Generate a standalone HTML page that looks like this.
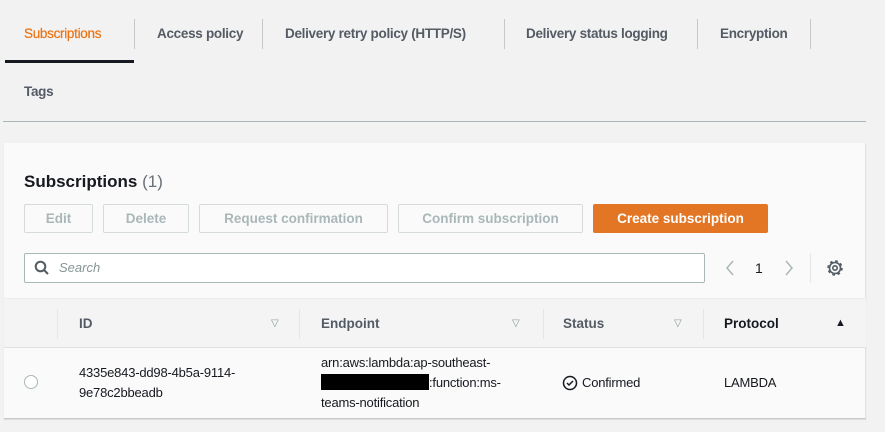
<!DOCTYPE html>
<html><head><style>
*{margin:0;padding:0;box-sizing:border-box}
body{width:885px;height:432px;background:#f2f2f2;font-family:"Liberation Sans",sans-serif;position:relative;overflow:hidden;color:#16191f}
.a{position:absolute;white-space:nowrap}
.tab{font-size:13.5px;font-weight:bold;color:#545b64;top:26px;letter-spacing:-0.3px}
.div{position:absolute;width:1px;background:#c8c8c8;top:19px;height:30px}
.btn{position:absolute;top:204px;height:29px;border:1px solid #d5dbdb;background:#fafafa;color:#aab7b8;font-size:13.5px;font-weight:bold;display:flex;align-items:center;justify-content:center;border-radius:2px}
.th{font-size:13.5px;font-weight:bold;color:#545b64;top:316px}
.cd{position:absolute;width:1px;background:#e6e6e6;top:309px;height:30px}
.tri{position:absolute;top:318px;font-size:10px;color:#879596}
.td{font-size:13px;color:#16191f;line-height:20px;letter-spacing:-0.2px}
</style></head><body>
<div class="a tab" style="left:24px;color:#ec7211;font-weight:normal;-webkit-text-stroke:0.2px #ec7211">Subscriptions</div>
<div class="div" style="left:134px"></div>
<div class="a tab" style="left:157px">Access policy</div>
<div class="div" style="left:262px"></div>
<div class="a tab" style="left:285px">Delivery retry policy (HTTP/S)</div>
<div class="div" style="left:504px"></div>
<div class="a tab" style="left:526px">Delivery status logging</div>
<div class="div" style="left:697px"></div>
<div class="a tab" style="left:720px">Encryption</div>
<div class="div" style="left:810px"></div>
<div class="a" style="left:5px;top:60px;width:129px;height:3px;background:#16191f"></div>
<div class="a tab" style="left:24px;top:84px">Tags</div>
<div class="a" style="left:3px;top:121px;width:863px;height:1px;background:#aab7b8"></div>

<div class="a" style="left:4px;top:143px;width:862px;height:276px;background:#fafafa;border-right:1px solid #e0e0e0;border-bottom:1px solid #c8c8c8;box-shadow:0 1px 1px rgba(0,0,0,.1)"></div>
<div class="a" style="left:24px;top:172px;font-size:17px;font-weight:bold">Subscriptions <span style="font-weight:normal;color:#687078">(1)</span></div>
<div class="btn" style="left:24px;width:69px">Edit</div>
<div class="btn" style="left:103px;width:86px">Delete</div>
<div class="btn" style="left:199px;width:189px">Request confirmation</div>
<div class="btn" style="left:398px;width:185px">Confirm subscription</div>
<div class="btn" style="left:593px;width:175px;background:#e27625;border-color:#e27625;color:#fff">Create subscription</div>

<div class="a" style="left:24px;top:253px;width:681px;height:30px;border:1px solid #aab7b8;background:#fff;border-radius:2px"></div>
<svg class="a" style="left:34px;top:260px" width="16" height="16" viewBox="0 0 16 16"><circle cx="6.5" cy="6.5" r="4.8" fill="none" stroke="#545b64" stroke-width="2"/><line x1="10" y1="10" x2="14" y2="14" stroke="#545b64" stroke-width="2"/></svg>
<div class="a" style="left:59px;top:260px;font-size:13px;font-style:italic;color:#879596">Search</div>
<svg class="a" style="left:723px;top:259px" width="14" height="18"><path d="M10 2L4 9l6 7" fill="none" stroke="#aab7b8" stroke-width="1.5"/></svg>
<div class="a" style="left:755px;top:260px;font-size:14px">1</div>
<svg class="a" style="left:782px;top:259px" width="14" height="18"><path d="M4 2l6 7-6 7" fill="none" stroke="#aab7b8" stroke-width="1.5"/></svg>
<div class="a" style="left:810px;top:253px;width:1px;height:30px;background:#e6e6e6"></div>
<svg class="a" style="left:825px;top:258px" width="20" height="20" viewBox="0 0 20 20"><circle cx="10" cy="10" r="6.5" fill="none" stroke="#545b64" stroke-width="2.5" stroke-dasharray="2.5 2.6"/><circle cx="10" cy="10" r="5.5" fill="none" stroke="#545b64" stroke-width="1.6"/><circle cx="10" cy="10" r="2.2" fill="none" stroke="#545b64" stroke-width="1.6"/></svg>

<div class="a" style="left:4px;top:298px;width:862px;height:50px;background:#f4f4f4;border-top:1px solid #eaeded;border-bottom:1px solid #e0e0e0"></div>
<div class="cd" style="left:57px"></div>
<div class="a th" style="left:79px">ID</div><div class="tri" style="left:271px">▽</div>
<div class="cd" style="left:299px"></div>
<div class="a th" style="left:321px">Endpoint</div><div class="tri" style="left:512px">▽</div>
<div class="cd" style="left:543px"></div>
<div class="a th" style="left:563px">Status</div><div class="tri" style="left:674px">▽</div>
<div class="cd" style="left:703px"></div>
<div class="a th" style="left:724px;color:#16191f">Protocol</div><div class="a" style="left:835px;top:317px;font-size:11px">▲</div>

<div class="a" style="left:24px;top:375px;width:14px;height:14px;border:1px solid #aab7b8;border-radius:50%;background:#fff"></div>
<div class="a td" style="left:79px;top:363px">4335e843-dd98-4b5a-9114-<br>9e78c2bbeadb</div>
<div class="a td" style="left:321px;top:353px">arn:aws:lambda:ap-southeast-<br><span style="display:inline-block;width:108px;height:16px;background:#000;vertical-align:-3px"></span>:function:ms-<br>teams-notification</div>
<svg class="a" style="left:562px;top:375px" width="16" height="16" viewBox="0 0 16 16"><circle cx="8" cy="8" r="6.5" fill="none" stroke="#16191f" stroke-width="1.5"/><path d="M5 8l2 2 4-4" fill="none" stroke="#16191f" stroke-width="1.5"/></svg>
<div class="a td" style="left:582px;top:373px;color:#16191f">Confirmed</div>
<div class="a td" style="left:724px;top:373px">LAMBDA</div>
</body></html>
